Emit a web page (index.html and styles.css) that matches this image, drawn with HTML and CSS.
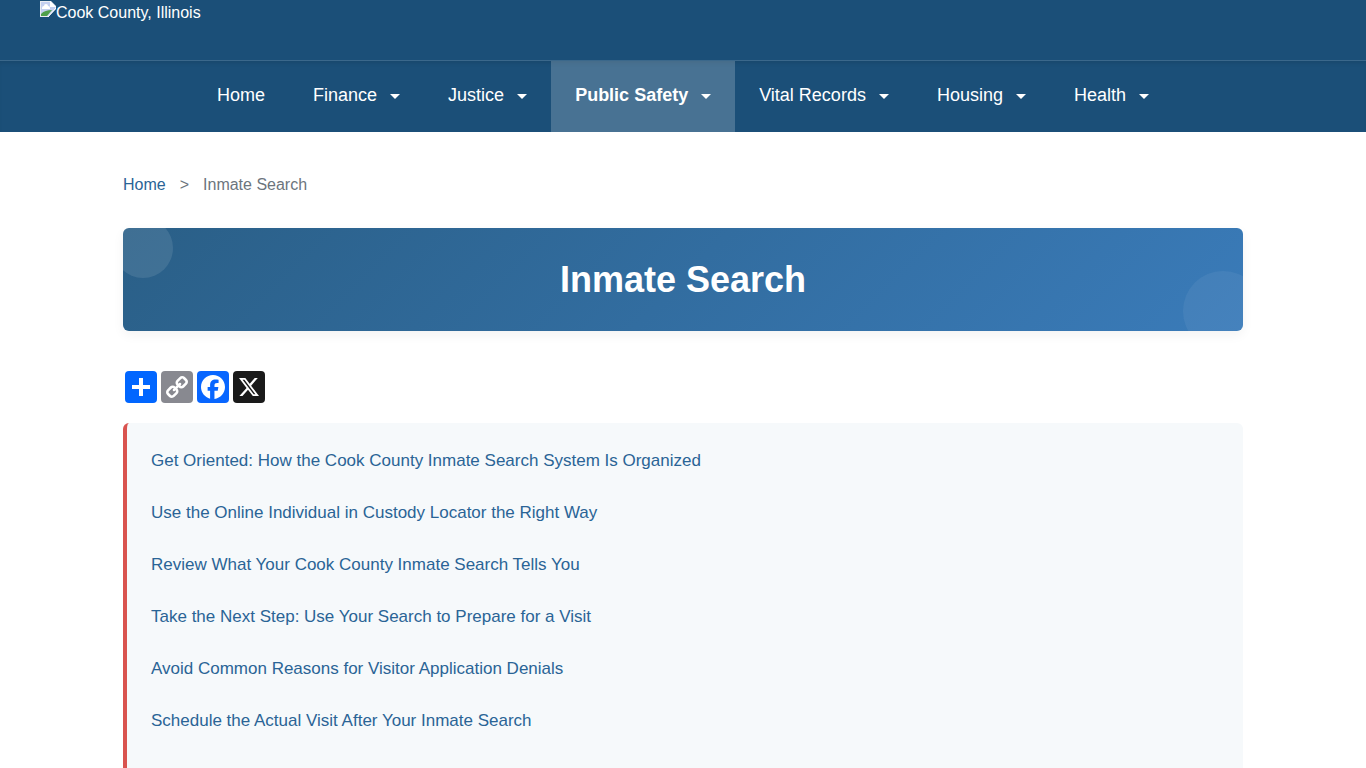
FILE: index.html
```html
<!DOCTYPE html>
<html lang="en">
<head>
    <meta charset="UTF-8">
    <meta name="viewport" content="width=device-width, initial-scale=1.0">
    <title>Inmate Search</title>
    <link rel="stylesheet" href="styles.css">
</head>
<body>
    <header class="site-header">
        <div class="top-bar">
            <a class="logo" href="#">
                <svg width="16" height="16" viewBox="0 0 16 16" aria-hidden="true">
                    <path fill="#e9ecf2" d="M0 0h11l5 5v3l-8 8H0z"/>
                    <path fill="#c3cff0" d="M1 1h9v5h5v2l-7 7H1z"/>
                    <path fill="#fff" d="M2 7a2 2 0 0 1 2-2 2 2 0 0 1 4 0 2 2 0 0 1 2 2v1H2z"/>
                    <path fill="#4fa04a" d="M1 15v-2c3-3 6-4 11-4l-5 6z"/>
                    <path fill="#fff" d="M10 0l6 6h-6z"/>
                    <path fill="none" stroke="#fff" d="M16 7l-8 9"/>
                </svg><span>Cook County, Illinois</span>
            </a>
        </div>
        <nav class="main-nav">
            <ul>
                <li><a href="#">Home</a></li>
                <li><a class="dropdown" href="#">Finance</a></li>
                <li><a class="dropdown" href="#">Justice</a></li>
                <li><a class="dropdown active" href="#">Public Safety</a></li>
                <li><a class="dropdown" href="#">Vital Records</a></li>
                <li><a class="dropdown" href="#">Housing</a></li>
                <li><a class="dropdown" href="#">Health</a></li>
            </ul>
        </nav>
    </header>

    <main class="container">
        <nav class="breadcrumb" aria-label="Breadcrumb">
            <a href="#">Home</a>
            <span>&gt;</span>
            <span>Inmate Search</span>
        </nav>

        <div class="page-title">
            <h1>Inmate Search</h1>
        </div>

        <div class="share">
            <a class="share-more" href="#" aria-label="Share">
                <svg viewBox="0 0 32 32"><path fill="#fff" d="M14 7h4v18h-4z"/><path fill="#fff" d="M7 14h18v4H7z"/></svg>
            </a>
            <a class="share-link" href="#" aria-label="Copy Link">
                <svg viewBox="0 0 32 32"><path fill="#fff" d="M7.591 21.177c0-.36.126-.665.377-.917l2.804-2.804a1.235 1.235 0 0 1 .913-.378c.377 0 .7.144.97.43-.026.028-.11.11-.255.25-.144.14-.24.236-.29.29a2.82 2.82 0 0 0-.2.256 1.056 1.056 0 0 0-.177.344 1.43 1.43 0 0 0-.046.37c0 .36.126.666.377.918a1.25 1.25 0 0 0 .918.377c.126.001.251-.015.373-.047.125-.037.242-.096.345-.175.09-.06.176-.127.256-.2.1-.094.196-.19.29-.29.14-.142.223-.23.25-.254.297.28.445.607.445.984 0 .36-.126.664-.377.916l-2.778 2.79a1.242 1.242 0 0 1-.917.364c-.36 0-.665-.118-.917-.35l-1.982-1.97a1.223 1.223 0 0 1-.378-.9l-.001-.004Zm9.477-9.504c0-.36.126-.665.377-.917l2.777-2.79a1.235 1.235 0 0 1 .913-.378c.35 0 .656.12.917.364l1.984 1.968c.254.252.38.553.38.903 0 .36-.126.665-.38.917l-2.802 2.804a1.238 1.238 0 0 1-.916.364c-.377 0-.7-.14-.97-.418.026-.027.11-.11.255-.25a7.5 7.5 0 0 0 .29-.29c.072-.08.139-.166.2-.255.08-.103.14-.22.176-.344.032-.12.048-.245.047-.37 0-.36-.126-.662-.377-.914a1.247 1.247 0 0 0-.917-.377c-.136 0-.26.015-.37.046-.114.03-.23.09-.346.175a3.868 3.868 0 0 0-.256.2c-.054.05-.15.148-.29.29-.14.146-.222.23-.25.258-.294-.278-.442-.606-.442-.983v-.003ZM5.003 21.177c0 1.078.382 1.99 1.146 2.736l1.982 1.968c.745.75 1.658 1.12 2.736 1.12 1.087 0 2.004-.38 2.75-1.143l2.777-2.79c.75-.747 1.12-1.66 1.12-2.737 0-1.106-.392-2.046-1.183-2.818l1.186-1.185c.774.79 1.708 1.186 2.805 1.186 1.078 0 1.995-.376 2.75-1.13l2.803-2.81c.751-.754 1.128-1.671 1.128-2.748 0-1.08-.382-1.993-1.146-2.738L23.875 6.12C23.13 5.372 22.218 5 21.139 5c-1.087 0-2.004.382-2.75 1.146l-2.777 2.79c-.75.747-1.12 1.66-1.12 2.737 0 1.105.392 2.045 1.183 2.817l-1.186 1.186c-.774-.79-1.708-1.186-2.805-1.186-1.078 0-1.995.377-2.75 1.132L6.13 18.426c-.754.755-1.13 1.672-1.13 2.75l.003.001Z"/></svg>
            </a>
            <a class="share-facebook" href="#" aria-label="Facebook">
                <svg viewBox="0 0 32 32"><path fill="#fff" d="M28 16c0-6.627-5.373-12-12-12S4 9.373 4 16c0 5.628 3.875 10.35 9.101 11.647v-7.98h-2.474V16H13.1v-1.58c0-4.085 1.849-5.978 5.859-5.978.76 0 2.072.15 2.608.298v3.325c-.283-.03-.775-.045-1.386-.045-1.967 0-2.728.745-2.728 2.683V16h3.92l-.673 3.667h-3.247v8.245C23.395 27.195 28 22.135 28 16Z"/></svg>
            </a>
            <a class="share-x" href="#" aria-label="X">
                <svg viewBox="0 0 32 32"><path fill="#fff" d="M21.751 7h3.067l-6.7 7.658L26 25.078h-6.172l-4.833-6.32-5.531 6.32h-3.07l7.167-8.19L6 7h6.328l4.37 5.777L21.75 7Zm-1.076 16.242h1.7L11.404 8.74H9.58l11.094 14.503Z"/></svg>
            </a>
        </div>

        <ul class="toc">
            <li><a href="#">Get Oriented: How the Cook County Inmate Search System Is Organized</a></li>
            <li><a href="#">Use the Online Individual in Custody Locator the Right Way</a></li>
            <li><a href="#">Review What Your Cook County Inmate Search Tells You</a></li>
            <li><a href="#">Take the Next Step: Use Your Search to Prepare for a Visit</a></li>
            <li><a href="#">Avoid Common Reasons for Visitor Application Denials</a></li>
            <li><a href="#">Schedule the Actual Visit After Your Inmate Search</a></li>
        </ul>
    </main>
</body>
</html>
```
FILE: styles.css
```css
* {
    box-sizing: border-box;
}
body {
    margin: 0;
    font-family: "Liberation Sans", Arial, sans-serif;
    font-size: 16px;
    line-height: 24px;
    color: #333;
    background: #fff;
}
a {
    color: #2a6496;
    text-decoration: none;
}
ul {
    list-style: none;
    margin: 0;
    padding: 0;
}

/* header */
.site-header {
    background: #1b4f78;
}
.top-bar {
    height: 60px;
    padding: 0 40px;
}
.logo {
    display: inline-flex;
    color: #fff;
}
.main-nav {
    border-top: 1px solid #3b688b;
    box-shadow: inset 0 4px 4px -2px rgba(0,0,0,0.1);
}
.main-nav ul {
    display: flex;
    justify-content: center;
}
.main-nav a {
    display: flex;
    align-items: center;
    gap: 13px;
    padding: 21px 24px 23px;
    font-size: 18px;
    line-height: 27px;
    color: #fff;
}
.main-nav .active {
    background: rgba(255,255,255,0.2);
    font-weight: bold;
}
.dropdown::after {
    content: "";
    margin-top: 2px;
    border: 5px solid transparent;
    border-top-color: #fff;
    border-bottom: 0;
}

/* content */
.container {
    max-width: 1200px;
    margin: 0 auto;
    padding: 40px;
}
.breadcrumb {
    display: flex;
    gap: 14px;
    margin-bottom: 30px;
    line-height: 26px;
    color: #6c757d;
}
.page-title {
    position: relative;
    overflow: hidden;
    margin-bottom: 40px;
    padding: 30px;
    border-radius: 6px;
    background: linear-gradient(135deg, #2a5f87, #3a7bb9);
    box-shadow: 0 4px 12px rgba(0,0,0,0.05);
    text-align: center;
}
.page-title::before,
.page-title::after {
    content: "";
    position: absolute;
    border-radius: 50%;
}
.page-title::before {
    top: -10px;
    left: -10px;
    width: 60px;
    height: 60px;
    background: rgba(255,255,255,0.1);
}
.page-title::after {
    right: -20px;
    bottom: -20px;
    width: 80px;
    height: 80px;
    background: rgba(255,255,255,0.06);
}
.page-title h1 {
    margin: 0;
    font-size: 36px;
    line-height: 43px;
    color: #fff;
}

.share {
    display: flex;
    gap: 4px;
    margin-bottom: 20px;
    padding: 0 2px;
}
.share a {
    width: 32px;
    height: 32px;
    border-radius: 4px;
}
.share svg {
    display: block;
}
.share-more {
    background: #0166ff;
}
.share-link {
    background: #888990;
}
.share-facebook {
    background: #0866ff;
}
.share-x {
    background: #1a1a1a;
}

.toc {
    padding: 24px 24px 40px;
    border-left: 4px solid #d9534f;
    border-radius: 6px;
    background: #f6f9fb;
}
.toc li {
    padding-bottom: 25px;
    font-size: 17px;
    line-height: 27px;
}
```
